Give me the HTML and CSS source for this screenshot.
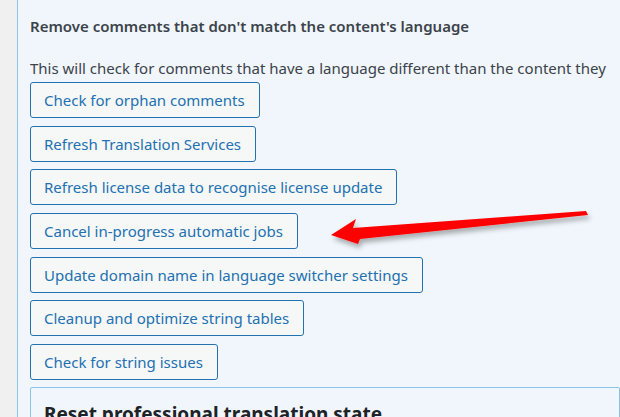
FILE: index.html
```html
<!DOCTYPE html>
<html lang="en">
<head>
  <meta charset="UTF-8">
  <title>Troubleshooting</title>
  <link rel="stylesheet" href="styles.css">
</head>
<body>

  <!-- Admin side strip -->
  <div class="side"></div>

  <!-- Troubleshooting panel -->
  <div class="panel">
    <h4 class="panel-title">Remove comments that don't match the content's language</h4>
    <p class="panel-text">This will check for comments that have a language different than the content they</p>

    <div class="actions">
      <button class="button">Check for orphan comments</button>
      <button class="button">Refresh Translation Services</button>
      <button class="button">Refresh license data to recognise license update</button>
      <button class="button">Cancel in-progress automatic jobs</button>
      <button class="button">Update domain name in language switcher settings</button>
      <button class="button">Cleanup and optimize string tables</button>
      <button class="button">Check for string issues</button>
    </div>

    <div class="box">
      <h3 class="box-title">Reset professional translation state</h3>
    </div>
  </div>

  <!-- Annotation arrow -->
  <svg class="arrow" width="620" height="417" viewBox="0 0 620 417">
    <defs>
      <filter id="shadow" x="-10%" y="-50%" width="120%" height="200%">
        <feDropShadow dx="2" dy="4" stdDeviation="2.5" flood-color="#000" flood-opacity="0.3"/>
      </filter>
    </defs>
    <polygon filter="url(#shadow)" fill="#ff0000"
      points="331,235 356,219 353,228 586,211 588,215 360,239 358,244"/>
  </svg>

</body>
</html>
```

FILE: styles.css
```css
/* General */
body {
  margin: 0;
  font-family: "Noto Sans", "Open Sans", sans-serif;
  background: #f0f0f1;
  color: #3c434a;
  display: flex;
  height: 417px;
  overflow: hidden;
  position: relative;
}

/* Side strip */
.side {
  width: 17px;
  flex-shrink: 0;
  background: #f0f0f1;
}

/* Panel */
.panel {
  flex: 1;
  background: #f0f6fc;
  border-left: 1px solid #8cc4e6;
  padding: 16px 0 0 12px;
  white-space: nowrap;
  overflow: hidden;
}

.panel-title {
  font-size: 15px;
  font-weight: 600;
  margin: 0 0 21px;
  line-height: 21px;
}

.panel-text {
  font-size: 15px;
  margin: 0 0 3px;
  line-height: 21px;
}

/* Buttons */
.actions {
  display: flex;
  flex-direction: column;
  align-items: flex-start;
  gap: 7.7px;
}

.button {
  font-family: inherit;
  font-size: 15px;
  color: #2271b1;
  background: #f6f7f7;
  border: 1px solid #2271b1;
  border-radius: 3px;
  height: 36px;
  padding: 0 14px 0 13px;
  cursor: pointer;
}

/* Sub box */
.box {
  margin-top: 7px;
  border: 1px solid #8cc4e6;
  border-radius: 2px;
  background: #f0f6fc;
  padding: 13px 13px;
}

.box-title {
  font-size: 19px;
  margin: 0;
  color: #1d2327;
}

/* Arrow overlay */
.arrow {
  position: absolute;
  top: 0;
  left: 0;
  pointer-events: none;
}
```
